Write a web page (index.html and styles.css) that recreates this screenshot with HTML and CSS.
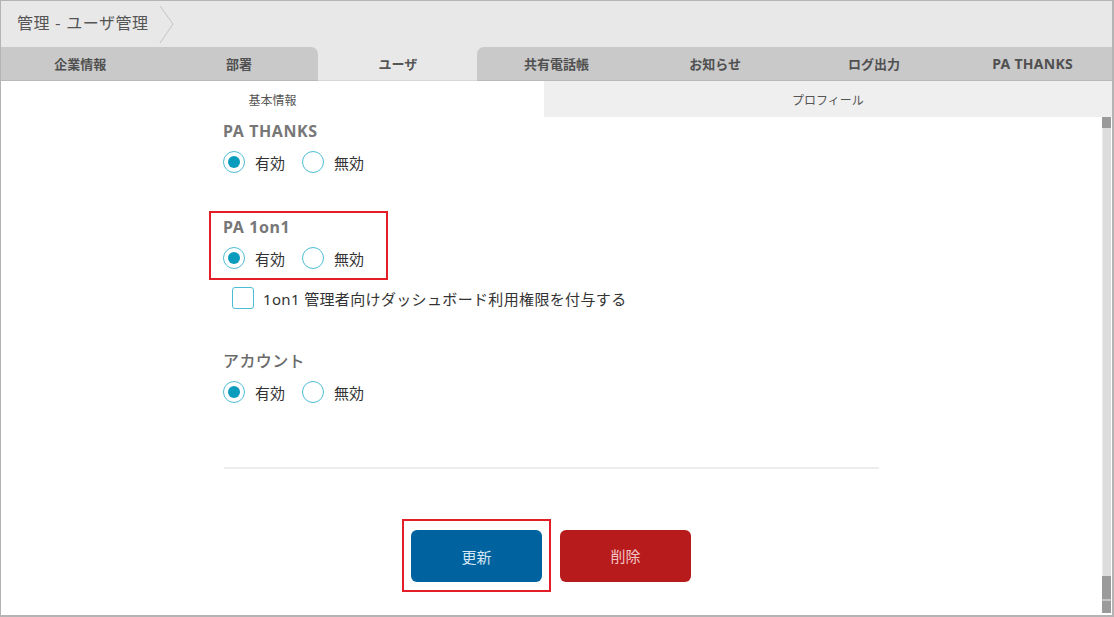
FILE: index.html
```html
<!DOCTYPE html>
<html lang="ja">
<head>
<meta charset="utf-8">
<title>管理 - ユーザ管理</title>
<link rel="stylesheet" href="styles.css">
</head>
<body>
<div class="frame">
  <header class="crumb">
    <span class="crumb-title">管理 - ユーザ管理</span>
    <svg class="crumb-sep" width="16" height="38" viewBox="0 0 16 38"><path d="M1 0 L14 18 L1 37" fill="none" stroke="#c4c4c4" stroke-width="1"/></svg>
  </header>
  <nav class="tabs">
    <div class="tab">企業情報</div>
    <div class="tab tab-before">部署</div>
    <div class="tab tab-active">ユーザ</div>
    <div class="tab tab-after">共有電話帳</div>
    <div class="tab">お知らせ</div>
    <div class="tab">ログ出力</div>
    <div class="tab tab-latin">PA THANKS</div>
  </nav>
  <div class="subtabs">
    <div class="subtab subtab-active">基本情報</div>
    <div class="subtab">プロフィール</div>
  </div>
  <div class="body">
    <main class="content">
      <section class="field field-first">
        <h3 class="field-title">PA THANKS</h3>
        <div class="radios">
          <label class="opt"><span class="radio checked"></span>有効</label>
          <label class="opt"><span class="radio"></span>無効</label>
        </div>
      </section>
      <section class="field field-marked">
        <h3 class="field-title">PA 1on1</h3>
        <div class="radios">
          <label class="opt"><span class="radio checked"></span>有効</label>
          <label class="opt"><span class="radio"></span>無効</label>
        </div>
      </section>
      <label class="check-row"><span class="checkbox"></span>1on1 管理者向けダッシュボード利用権限を付与する</label>
      <section class="field field-account">
        <h3 class="field-title field-title-plain">アカウント</h3>
        <div class="radios">
          <label class="opt"><span class="radio checked"></span>有効</label>
          <label class="opt"><span class="radio"></span>無効</label>
        </div>
      </section>
      <hr class="divider">
      <div class="actions">
        <div class="marked-btn"><button class="btn btn-primary">更新</button></div>
        <button class="btn btn-danger">削除</button>
      </div>
    </main>
    <div class="scrollbar">
      <div class="sb-arrow"></div>
      <div class="sb-track"></div>
      <div class="sb-thumb"></div>
      <div class="sb-arrow sb-arrow-bottom"></div>
    </div>
  </div>
</div>
</body>
</html>
```
FILE: styles.css
```css
* { box-sizing: border-box; }
html, body { margin: 0; padding: 0; background: #fff; }
body {
  font-family: "Noto Sans", "Noto Sans CJK JP", sans-serif;
  color: #333;
}
.frame {
  width: 1114px;
  height: 617px;
  border-style: solid;
  border-color: #b4b4b4;
  border-width: 1px 2px 2px 1px;
  display: flex;
  flex-direction: column;
  overflow: hidden;
  background: #fff;
}
.crumb {
  height: 46px;
  flex: none;
  background: #e8e8e8;
  display: flex;
  align-items: center;
  padding-left: 16px;
}
.crumb-title {
  font-size: 16px;
  line-height: 20px;
  color: #555;
  font-family: "Noto Sans CJK JP", sans-serif;
  letter-spacing: 0.5px;
  word-spacing: 1px;
  margin-bottom: 5px;
}
.crumb-sep { margin-left: 11px; margin-top: 1px; }
.tabs {
  height: 34px;
  flex: none;
  display: flex;
  background: #e8e8e8;
}
.tab {
  flex: 1 1 0;
  background: #c9c9c9;
  border-bottom: 1px solid #b9b9b9;
  display: flex;
  align-items: center;
  justify-content: center;
  font-size: 13px;
  font-weight: 700;
  color: #505050;
  font-family: "Noto Sans", "Noto Sans CJK JP", sans-serif;
}
.tab-latin { font-size: 14px; letter-spacing: 0.3px; }
.tab-before { border-top-right-radius: 7px; }
.tab-after { border-top-left-radius: 7px; }
.tab-active {
  background: #e8e8e8;
  border-radius: 7px 7px 0 0;
  border-bottom: 1px solid #d6d6d6;
  color: #555;
}
.subtabs {
  height: 36px;
  flex: none;
  display: flex;
}
.subtab {
  flex: 1 1 0;
  background: #efefef;
  display: flex;
  align-items: center;
  justify-content: center;
  font-size: 12px;
  color: #555;
  font-family: "Noto Sans CJK JP", sans-serif;
}
.subtab-active { background: #fff; flex: 0 0 543px; }
.body {
  flex: 1;
  display: flex;
  min-height: 0;
}
.content {
  flex: 1;
  padding-left: 222px;
  padding-top: 4px;
}
.field { width: 655px; }
.field-title {
  margin: 0;
  font-size: 16px;
  line-height: 20px;
  font-weight: 700;
  color: #777;
  letter-spacing: 0.6px;
}
.field-title-plain { font-weight: 500; color: #6a6a6a; letter-spacing: 0.4px; }
.radios {
  display: flex;
  margin-top: 10px;
  height: 22px;
  align-items: center;
}
.opt {
  display: flex;
  align-items: center;
  font-size: 15px;
  color: #333;
  margin-right: 17px;
  font-family: "Noto Sans CJK JP", sans-serif;
}
.radio {
  width: 22px;
  height: 22px;
  border: 1px solid #4cbdd6;
  border-radius: 50%;
  margin-right: 10px;
  display: flex;
  align-items: center;
  justify-content: center;
  background: #fff;
  flex: none;
}
.radio.checked::after {
  content: "";
  width: 12px;
  height: 12px;
  border-radius: 50%;
  background: #0a9cbd;
}
.field-marked {
  width: fit-content;
  margin-top: 38px;
  margin-left: -14px;
  border: 2px solid #e41e26;
  padding: 4px 22px 9px 12px;
}
.field-marked .opt:last-child { margin-right: 0; }
.check-row {
  display: flex;
  align-items: center;
  margin-top: 7px;
  margin-left: 9px;
  font-size: 15px;
  color: #333;
  height: 22px;
  letter-spacing: 0.35px;
}
.checkbox {
  width: 22px;
  height: 22px;
  border: 1px solid #4cbdd6;
  border-radius: 3px;
  margin-right: 9px;
  flex: none;
}
.field-account { margin-top: 42px; }
.divider {
  width: 655px;
  margin: 64px 0 0 1px;
  border: 0;
  height: 2px;
  background: #ececec;
}
.actions {
  display: flex;
  align-items: center;
  margin-top: 50px;
  padding-left: 179px;
}
.marked-btn {
  border: 2px solid #e41e26;
  padding: 9px 7px 8px 7px;
  margin-right: 9px;
}
.btn {
  width: 131px;
  height: 52px;
  border: 0;
  border-radius: 6px;
  font-size: 15px;
  font-family: "Noto Sans CJK JP", sans-serif;
  display: block;
}
.btn-primary { background: #00629f; color: #d4e6f3; }
.btn-danger { background: #b81b1c; color: #f2c6c6; }
.scrollbar {
  width: 9px;
  flex: none;
  display: flex;
  flex-direction: column;
  margin-right: 1px;
}
.sb-arrow { height: 11px; background: #9a9a9a; flex: none; }
.sb-track { flex: 1; background: #dcdcdc; border-left: 1px solid #eaeaea; }
.sb-thumb { height: 25px; background: #9a9a9a; flex: none; border-bottom: 2px solid #c4c4c4; }
.sb-arrow-bottom { height: 12px; margin-bottom: 2px; }
```
